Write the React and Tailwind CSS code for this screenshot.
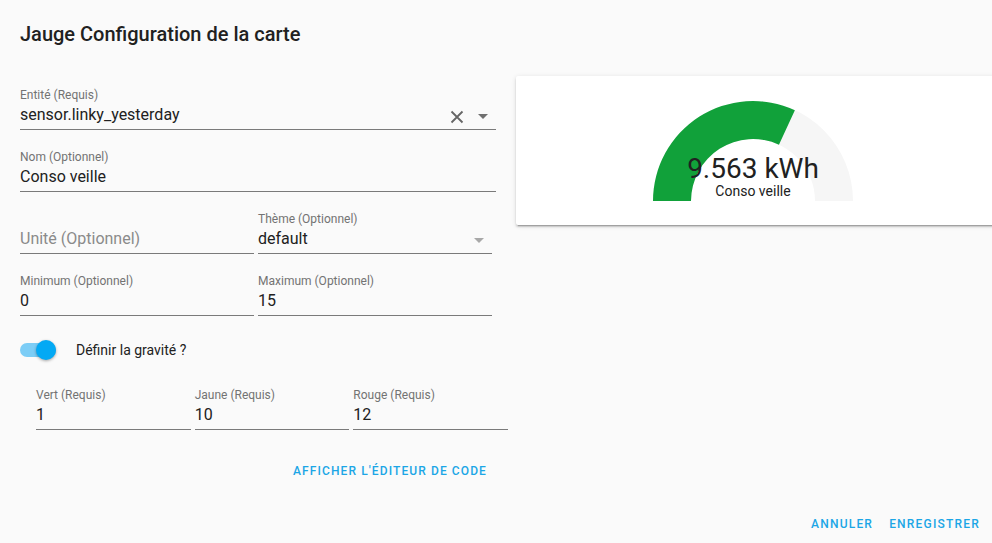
import React from "react";

const font = { fontFamily: "Roboto, 'Noto Sans', sans-serif" };

function Field({ label, value, placeholder, className = "", right = null }) {
  return (
    <div className={"flex flex-col h-[43px] border-b border-[#7a7a7a] " + className}>
      <div className="h-[16px] text-[12px] leading-[16px] text-[#737373]">{label || "\u00a0"}</div>
      <div className="flex items-center h-[24px]">
        <div className={"flex-1 text-[16px] leading-[24px] " + (placeholder ? "text-[#8a8a8a]" : "text-[#212121]")}>
          {value || placeholder}
        </div>
        {right}
      </div>
    </div>
  );
}

function Arrow({ color = "#737373" }) {
  return (
    <svg width="10" height="5" viewBox="0 0 10 5" className="mr-[8px] mt-[2px]">
      <path d="M0 0 L10 0 L5 5 Z" fill={color} />
    </svg>
  );
}

export default function App() {
  return (
    <div style={font} className="w-[992px] h-[543px] bg-[#fafafa] overflow-hidden flex flex-col text-[#212121]">
      <div className="pl-[20px] pt-[20px] h-[76px] text-[20px] leading-[28px] font-medium text-[#212121]">
        Jauge Configuration de la carte
      </div>
      <div className="flex flex-1">
        <div className="ml-[20px] w-[476px] pt-[11px] flex flex-col">
          <Field
            label="Entité (Requis)"
            value="sensor.linky_yesterday"
            right={
              <div className="flex items-center">
                <svg width="14" height="14" viewBox="0 0 14 14" className="mr-[14px] mt-[4px]">
                  <path d="M1.5 1.5 L12.5 12.5 M12.5 1.5 L1.5 12.5" stroke="#666" strokeWidth="1.8" />
                </svg>
                <Arrow color="#6f6f6f" />
              </div>
            }
          />
          <Field className="mt-[19px]" label="Nom (Optionnel)" value="Conso veille" />
          <div className="flex gap-[4px] mt-[19px] w-[472px]">
            <Field className="flex-1" label="" placeholder="Unité (Optionnel)" />
            <Field className="flex-1" label="Thème (Optionnel)" value="default" right={<Arrow color="#a8a8a8" />} />
          </div>
          <div className="flex gap-[4px] mt-[19px] w-[472px]">
            <Field className="flex-1" label="Minimum (Optionnel)" value="0" />
            <Field className="flex-1" label="Maximum (Optionnel)" value="15" />
          </div>
          <div className="flex items-center mt-[24px] h-[20px]">
            <div className="relative w-[36px] h-[20px] flex items-center">
              <div className="w-[36px] h-[14px] rounded-full bg-[#7ccdf6]" />
              <div className="absolute left-[16px] top-0 w-[20px] h-[20px] rounded-full bg-[#03a9f4] shadow-[0_1px_3px_rgba(0,0,0,0.35)]" />
            </div>
            <div className="ml-[20px] text-[14px] leading-[20px] text-[#212121]">Définir la gravité ?</div>
          </div>
          <div className="flex gap-[4px] mt-[27px] ml-[16px] w-[472px]">
            <Field className="flex-1" label="Vert (Requis)" value="1" />
            <Field className="flex-1" label="Jaune (Requis)" value="10" />
            <Field className="flex-1" label="Rouge (Requis)" value="12" />
          </div>
          <div className="flex justify-end mt-[32px] w-[467px]">
            <button className="text-[12px] leading-[18px] font-medium tracking-[1.1px] text-[#1ba6e6] uppercase">
              Afficher l'éditeur de code
            </button>
          </div>
        </div>
        <div className="ml-[20px] w-[490px] h-[149px] bg-white rounded-[2px] shadow-[0_2px_2px_rgba(0,0,0,0.14),0_1px_5px_rgba(0,0,0,0.12),0_3px_1px_-2px_rgba(0,0,0,0.2)] flex shrink-0">
          <div className="relative w-[200px] h-[100px] mt-[25px] ml-[137px]">
            <svg width="200" height="100" viewBox="0 0 200 100" className="block">
              <path d="M0 100 A100 100 0 0 1 200 100 L162 100 A62 62 0 0 0 38 100 Z" fill="#f6f6f6" />
              <path d="M0 100 A100 100 0 0 1 141.87 9.19 L125.96 43.7 A62 62 0 0 0 38 100 Z" fill="#11a13a" />
            </svg>
            <div className="absolute left-0 right-0 top-[51px] flex flex-col items-center">
              <div className="text-[28px] leading-[34px] text-[#212121]">9.563 kWh</div>
              <div className="text-[14px] leading-[16px] text-[#212121] mt-[-3px]">Conso veille</div>
            </div>
          </div>
        </div>
      </div>
      <div className="flex justify-end gap-[16px] pr-[12px] pb-[10px]">
        <button className="text-[12px] leading-[18px] font-medium tracking-[1.2px] text-[#1ba6e6]">ANNULER</button>
        <button className="text-[12px] leading-[18px] font-medium tracking-[1.2px] text-[#1ba6e6]">ENREGISTRER</button>
      </div>
    </div>
  );
}
